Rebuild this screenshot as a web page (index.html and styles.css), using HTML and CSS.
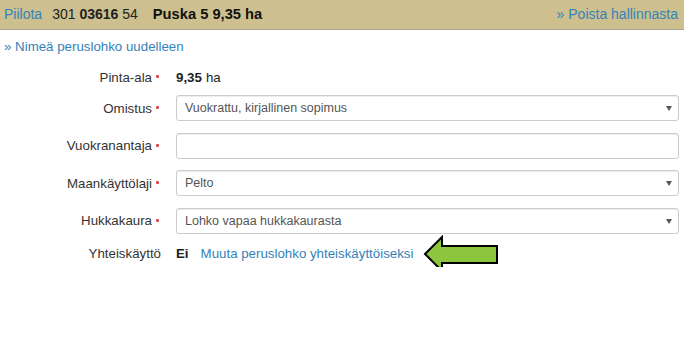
FILE: index.html
```html
<!DOCTYPE html>
<html lang="fi">
<head>
<meta charset="utf-8">
<title>Peruslohko</title>
<link rel="stylesheet" href="styles.css">
</head>
<body>
<div class="header">
  <div class="header-left">
    <a class="link" href="#">Piilota</a>
    <span class="code">301 <b>03616</b> 54</span>
    <b class="title">Puska 5 9,35 ha</b>
  </div>
  <a class="link" href="#">» Poista hallinnasta</a>
</div>
<div class="rename"><a class="link" href="#">» Nimeä peruslohko uudelleen</a></div>
<div class="form">
  <div class="row row-static row-first">
    <div class="label">Pinta-ala<span class="req"></span></div>
    <div class="value"><b>9,35</b> ha</div>
  </div>
  <div class="row">
    <div class="label">Omistus<span class="req"></span></div>
    <div class="control select">Vuokrattu, kirjallinen sopimus</div>
  </div>
  <div class="row">
    <div class="label">Vuokranantaja<span class="req"></span></div>
    <div class="control"></div>
  </div>
  <div class="row">
    <div class="label">Maankäyttölaji<span class="req"></span></div>
    <div class="control select">Pelto</div>
  </div>
  <div class="row">
    <div class="label">Hukkakaura<span class="req"></span></div>
    <div class="control select">Lohko vapaa hukkakaurasta</div>
  </div>
  <div class="row row-static row-last">
    <div class="label label-plain">Yhteiskäyttö</div>
    <div class="value"><b>Ei</b><a class="link share" href="#">Muuta peruslohko yhteiskäyttöiseksi</a>
      <svg class="arrow" width="76" height="38" viewBox="0 0 76 38"><polygon points="2,19 19,2 19,11 74,11 74,28 19,28 19,36" fill="#8cc63f" stroke="#000" stroke-width="2" stroke-linejoin="miter"/></svg>
    </div>
  </div>
</div>
</body>
</html>
```
FILE: styles.css
```css
* { box-sizing: border-box; }
body {
  margin: 0;
  font-family: "Liberation Sans", Arial, sans-serif;
  color: #333;
  background: #fff;
}
.link { color: #3582b8; text-decoration: none; }
.header {
  height: 30px;
  background: #cdc08e;
  border-bottom: 1px solid #a8a395;
  display: flex;
  align-items: center;
  justify-content: space-between;
  padding: 0 6px 1px 4px;
  font-size: 14px;
}
.header-left { display: flex; align-items: center; }
.code { margin-left: 10px; color: #222; }
.title { margin-left: 15px; color: #111; font-size: 14.7px; }
.rename {
  font-size: 13.3px;
  padding: 9px 4px 0;
  line-height: 16px;
}
.form {
  display: flex;
  flex-direction: column;
  padding: 0 5px 0 0;
  font-size: 13.3px;
}
.row {
  display: flex;
  align-items: center;
  height: 26px;
  margin-top: 11.5px;
}
.row-first { margin-top: 12px; height: 20px; margin-bottom: -3.5px; }
.row-last { margin-top: 7px; height: 26px; }
.label {
  width: 162px;
  flex: none;
  text-align: right;
  color: #333;
}
.label-plain { padding-right: 1px; }
.req {
  display: inline-block;
  width: 3px;
  height: 3px;
  background: #e0474c;
  vertical-align: middle;
  margin: 0 3px 2px 4px;
  border-radius: 1px;
}
.value {
  margin-left: 14px;
  display: flex;
  align-items: center;
  color: #222;
}
.value b { margin-right: 4px; }
.share { margin-left: 8px; }
.arrow { margin-left: 10px; flex: none; }
.control {
  margin-left: 14px;
  flex: 1;
  height: 26px;
  border: 1px solid #ccc;
  border-radius: 3px;
  box-shadow: inset 0 1px 1px rgba(0,0,0,0.075);
  font-size: 12.5px;
  color: #555;
  padding: 0 0 0 8px;
  line-height: 24px;
  position: relative;
}
.select::after {
  content: "";
  position: absolute;
  right: 6px;
  top: 10px;
  border-left: 3px solid transparent;
  border-right: 3px solid transparent;
  border-top: 5px solid #555;
}
```
